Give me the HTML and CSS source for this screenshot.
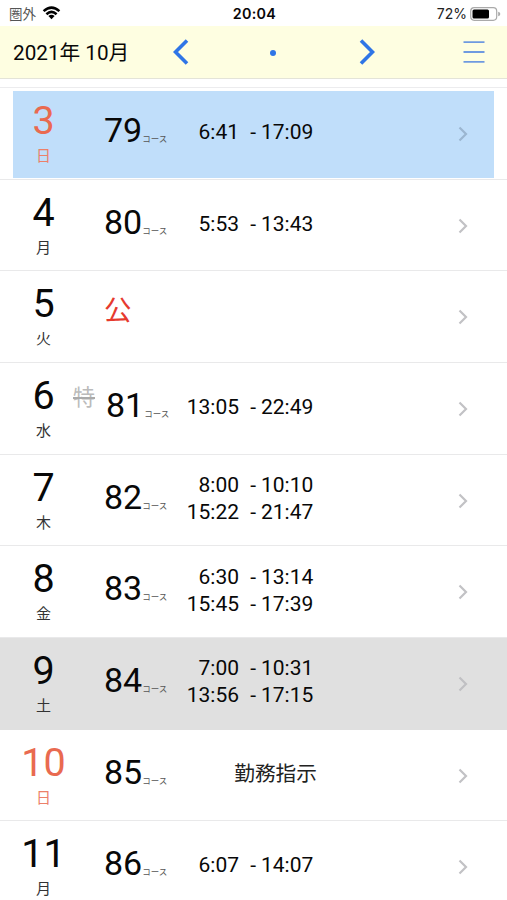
FILE: index.html
```
<!DOCTYPE html>
<html lang="ja">
<head>
<meta charset="utf-8">
<title>2021年 10月</title>
<link rel="stylesheet" href="styles.css">
</head>
<body>
<div class="status">
  <div class="carrier"><span>圏外</span>
    <svg width="19" height="14" viewBox="0 0 19 14"><path d="M1.600 5.200Q9.500-2 17.400 5.200M4.400 8.200Q9.500 3.600 14.600 8.200" fill="none" stroke="#000" stroke-width="2.500"/><path d="M6.400 10.100Q9.500 7.600 12.600 10.100L9.500 13.200Z"/></svg>
  </div>
  <div class="clock">20:04</div>
  <div class="battery"><span>72%</span>
    <svg width="31" height="14" viewBox="0 0 31 14"><rect x=".7" y=".7" width="26" height="12.600" rx="3.500" fill="#fff" stroke="#aaa" stroke-width="1.200"/><rect x="2.500" y="2.500" width="16.500" height="9" rx="1.500"/><path d="M28.200 4.800Q30.300 5.300 30.300 7T28.200 9.200Z" fill="#aaa"/></svg>
  </div>
</div>
<header class="bar">
  <h1>2021年 10月</h1>
  <svg class="prev" width="16" height="26" viewBox="0 0 16 26"><path d="M14 1.500L2.500 13L14 24.500"/></svg>
  <i class="dot"></i>
  <svg class="next" width="16" height="26" viewBox="0 0 16 26"><path d="M2 1.500L13.500 13L2 24.500"/></svg>
  <svg class="menu" width="22" height="22" viewBox="0 0 22 22"><path d="M.5 1.200H21.500M.5 11H21.500M.5 20.800H21.500"/></svg>
</header>
<main class="list">
  <section class="row today sunday"><div class="day"><b>3</b><small>日</small></div><div class="course"><b>79</b><small>コース</small></div><div class="times"><span>6:41</span><i>-</i><span>17:09</span></div><svg class="chev" viewBox="0 0 10 16"><path d="M1.500 1.500L8 8L1.500 14.500"/></svg></section>
  <section class="row"><div class="day"><b>4</b><small>月</small></div><div class="course"><b>80</b><small>コース</small></div><div class="times"><span>5:53</span><i>-</i><span>13:43</span></div><svg class="chev" viewBox="0 0 10 16"><path d="M1.500 1.500L8 8L1.500 14.500"/></svg></section>
  <section class="row"><div class="day"><b>5</b><small>火</small></div><div class="course off">公</div><div class="times"></div><svg class="chev" viewBox="0 0 10 16"><path d="M1.500 1.500L8 8L1.500 14.500"/></svg></section>
  <section class="row special"><div class="day"><b>6</b><small>水</small></div><div class="course"><s>特</s><b>81</b><small>コース</small></div><div class="times"><span>13:05</span><i>-</i><span>22:49</span></div><svg class="chev" viewBox="0 0 10 16"><path d="M1.500 1.500L8 8L1.500 14.500"/></svg></section>
  <section class="row"><div class="day"><b>7</b><small>木</small></div><div class="course"><b>82</b><small>コース</small></div><div class="times"><span>8:00</span><i>-</i><span>10:10</span><span>15:22</span><i>-</i><span>21:47</span></div><svg class="chev" viewBox="0 0 10 16"><path d="M1.500 1.500L8 8L1.500 14.500"/></svg></section>
  <section class="row"><div class="day"><b>8</b><small>金</small></div><div class="course"><b>83</b><small>コース</small></div><div class="times"><span>6:30</span><i>-</i><span>13:14</span><span>15:45</span><i>-</i><span>17:39</span></div><svg class="chev" viewBox="0 0 10 16"><path d="M1.500 1.500L8 8L1.500 14.500"/></svg></section>
  <section class="row selected"><div class="day"><b>9</b><small>土</small></div><div class="course"><b>84</b><small>コース</small></div><div class="times"><span>7:00</span><i>-</i><span>10:31</span><span>13:56</span><i>-</i><span>17:15</span></div><svg class="chev" viewBox="0 0 10 16"><path d="M1.500 1.500L8 8L1.500 14.500"/></svg></section>
  <section class="row sunday"><div class="day"><b>10</b><small>日</small></div><div class="course"><b>85</b><small>コース</small></div><div class="note">勤務指示</div><svg class="chev" viewBox="0 0 10 16"><path d="M1.500 1.500L8 8L1.500 14.500"/></svg></section>
  <section class="row"><div class="day"><b>11</b><small>月</small></div><div class="course"><b>86</b><small>コース</small></div><div class="times"><span>6:07</span><i>-</i><span>14:07</span></div><svg class="chev" viewBox="0 0 10 16"><path d="M1.500 1.500L8 8L1.500 14.500"/></svg></section>
</main>
</body>
</html>
```
FILE: styles.css
```
* { box-sizing: border-box; }
html, body { margin: 0; height: 900px; overflow: hidden; }
body { background: #fff; color: #080808; font-family: Roboto, "Noto Sans CJK JP", sans-serif; }
b, i, h1 { font-weight: 400; font-style: normal; }
svg { display: block; flex: none; }

.status { height: 26px; display: grid; grid-template-columns: 1fr auto 1fr; align-items: center; padding: 1px 6px 0 9px; font: 14px/20px Inter, "Noto Sans CJK JP", sans-serif; }
.carrier, .battery { display: flex; align-items: center; }
.carrier { gap: 6px; color: #555; font-size: 13.500px; }
.carrier svg { margin-top: -1px; }
.clock { font-weight: 600; font-size: 14.300px; letter-spacing: .3px; margin-left: -1px; }
.battery { justify-content: flex-end; gap: 3px; color: #222; }

.bar { height: 53px; display: flex; align-items: center; background: #fefee1; border-bottom: 1px solid #e4e4d8; padding-left: 13px; }
.bar h1 { margin: 0; padding-top: 2px; width: 160px; font-size: 20.700px; line-height: 26px; white-space: nowrap; }
.bar path { fill: none; stroke: #2f75e6; stroke-width: 3.600; }
.dot { width: 6px; height: 6px; border-radius: 50%; background: #2f75e6; margin: 1px 83px 0 81px; }
.menu { margin-left: 88px; }
.bar .menu path { stroke: #6f9ae0; stroke-width: 1.800; }

.list { margin-top: 8px; border-top: 1px solid #ececee; }
.row { height: 91.670px; display: grid; grid-template-columns: 87px 84px 142px 1fr; align-items: start; border-bottom: 1px solid #e9e9ea; }
.today { background: linear-gradient(#c0defa, #c0defa) 13px 3px / 481px 87px no-repeat; }
.selected { background: #e0e0e0; border-color: #e0e0e0; }
.day { text-align: center; padding-top: 10px; }
.day b, .day small { display: block; }
.day b { font-size: 39.500px; line-height: 45px; }
.day small { font-size: 15px; line-height: 20px; margin-top: 3px; color: #333; }
.sunday .day b { color: #e96a50; }
.sunday .day small { color: #ec8069; }
.course { display: flex; align-items: baseline; padding: 20px 0 0 17px; white-space: nowrap; height: 70px; line-height: 44px; }
.course b { font-size: 34px; }
.course small { font-size: 8.500px; color: #555; }
.course.off { font-size: 27.500px; color: #e63a2e; padding-top: 18px; }
.course s { font-size: 22px; color: #bbb; margin-left: -31px; width: 33px; line-height: 30px; align-self: flex-start; text-decoration: line-through 1.500px #aaa; }
.times { display: grid; grid-template-columns: 68px 22px 51px; align-content: center; height: 89px; font-size: 21px; line-height: 27px; text-align: right; }
.times i { padding-right: 5px; }
.note { height: 85px; display: flex; align-items: center; justify-content: flex-end; margin-right: -4px; font-size: 20.700px; color: #222; }
.chev { width: 10px; height: 16px; margin: 38px 0 0 145px; }
.chev path { fill: none; stroke: #c2c2c5; stroke-width: 2.200; }
.today .chev path { stroke: #9bb6d0; }
.selected .chev path { stroke: #c0c0c3; }
```
